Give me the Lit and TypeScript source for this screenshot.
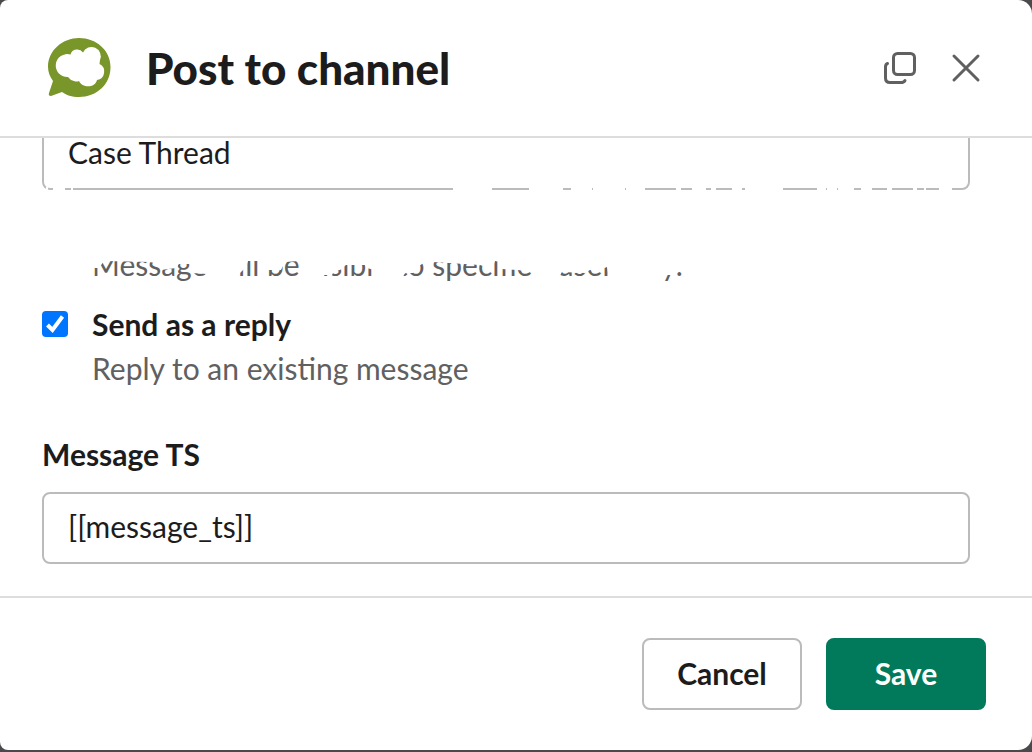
import { LitElement, html, css, svg } from "lit";
import { customElement } from "lit/decorators.js";

// Spans [start, end] along the lower edge of the first field that are worn away.
const EDGE_GAPS: number[][] = [
  [4, 6], [11, 14], [14, 23], [29, 31],
  [411, 450], [487, 521], [529, 550], [551, 583], [584, 603],
  [634, 639], [650, 664], [669, 674], [690, 700], [703, 741],
  [775, 784], [785, 795], [796, 812], [819, 830], [845, 850], [871, 875], [882, 884], [897, 910],
];

// Lower outline of the white patch over the faded note, in the note's own pixels.
const PATCH =
  "0,0 0,26 7,26 12,19 58,20 66,22 69,28 84,26 87,22 99,22 100,31 115,32 116,36 146,36 148,31 154,25 156,19 168,19 172,28 189,28 193,20 207,19 " +
  "208,36 230,36 231,33 240,33 242,29 248,28 254,23 273,23 275,26 282,28 284,36 311,35 313,31 321,31 324,26 333,20 341,20 388,23 400,27 403,19 408,20 " +
  "410,27 426,28 440,30 441,36 467,35 470,30 493,31 498,28 508,28 515,25 517,36 570,36 571,33 584,33 585,26 620,26 620,0";

@customElement("app-root")
export class AppRoot extends LitElement {
  static styles = css`
    :host {
      display: block;
      height: 100vh;
      background: #4a4a4c;
      color: #1d1c1d;
      font: 400 30px/44px Lato, sans-serif;
    }
    * { box-sizing: border-box; }
    .dialog {
      display: flex;
      flex-direction: column;
      height: calc(100vh - 2px);
      background: #fff;
      border-radius: 8px 14px 14px 8px;
      overflow: hidden;
    }
    header {
      display: flex;
      align-items: center;
      height: 138px;
      padding: 0 46px;
      border-bottom: 2px solid #ddd;
      flex: none;
    }
    .logo { width: 66px; height: 66px; flex: none; }
    h1 {
      flex: 1;
      margin: 0 0 0 34px;
      font-size: 44px;
      line-height: 60px;
      font-weight: 900;
    }
    .icon {
      display: flex;
      padding: 0;
      border: 0;
      background: none;
      color: #616061;
    }
    .icon + .icon { margin-left: 26px; }
    .icon svg { width: 40px; height: 40px; }
    main {
      flex: 1;
      min-height: 0;
      display: flex;
      flex-direction: column;
      justify-content: flex-end;
      padding: 0 62px 32px 42px;
      overflow: hidden;
    }
    .field { position: relative; flex: none; display: flex; }
    .text {
      width: 100%;
      height: 72px;
      padding: 0 24px 4px;
      border: 2px solid #bbb;
      border-radius: 8px;
      background: #fff;
      color: inherit;
      font: inherit;
      outline: 0;
    }
    .wear {
      position: absolute;
      left: 0;
      bottom: 0;
      width: 928px;
      height: 3px;
      fill: #fff;
    }
    .note {
      position: relative;
      margin: 52px 0 16px 50px;
      color: #616061;
      white-space: nowrap;
    }
    .patch { position: absolute; left: 0; top: 0; width: 620px; height: 44px; fill: #fff; }
    .check { display: grid; grid-template-columns: 50px 1fr; align-items: center; }
    .box {
      appearance: none;
      width: 26px;
      height: 26px;
      margin: 0;
      border-radius: 4px;
      background: #0075ff;
      grid-area: 1 / 1;
    }
    .tick { grid-area: 1 / 1; width: 26px; height: 26px; pointer-events: none; z-index: 1; }
    .check label { font-weight: 700; grid-area: 1 / 2; }
    .hint { grid-area: 2 / 2; color: #616061; }
    .label { font-weight: 700; margin: 42px 0 16px; }
    footer {
      display: flex;
      justify-content: flex-end;
      gap: 24px;
      flex: none;
      padding: 40px 46px;
      border-top: 2px solid #ddd;
    }
    .btn {
      width: 160px;
      height: 72px;
      padding: 0 0 2px;
      border: 2px solid #bbb;
      border-radius: 8px;
      background: #fff;
      color: inherit;
      font: inherit;
      font-weight: 700;
    }
    .save { background: #007a5a; border-color: #007a5a; color: #fff; }
  `;

  render() {
    return html`
      <section class="dialog" role="dialog" aria-labelledby="title">
        <header>
          <svg class="logo" viewBox="0 0 66 66" aria-hidden="true">
            <path fill="#78962a" d="M33 3C50 3 64.500 15 64.500 32C64.500 50 50 62 33 62C26 62 20 60 16 57L5 61Q2 61 3 58L7 46C4 42 2 37 2 32C2 15 17 3 33 3Z"/>
            <path fill="#fff" d="M24.500 19.500A7 7 0 0 1 37 17.500A9 9 0 0 1 54 25L53.500 29A8.500 8.500 0 0 1 51 45C49 53.500 36 53 33 46Q31 47.200 28 46Q24.500 45.500 22 42A11.500 11.500 0 1 1 24.500 19.500Z"/>
          </svg>
          <h1 id="title">Post to channel</h1>
          <button class="icon" aria-label="Open in new window">
            <svg viewBox="0 0 40 40" fill="none" stroke="currentColor" stroke-width="3" stroke-linecap="round">
              <rect x="13.500" y="5.500" width="21" height="21" rx="4"/>
              <path d="M7.500 15.500C6 16 5.500 17.500 5.500 19V30Q5.500 34.500 10 34.500H21C23 34.500 24.500 33.500 25 32.500"/>
            </svg>
          </button>
          <button class="icon" aria-label="Close">
            <svg viewBox="0 0 40 40" fill="none" stroke="currentColor" stroke-width="3" stroke-linecap="round">
              <path d="M8 8L32 32M32 8L8 32"/>
            </svg>
          </button>
        </header>
        <main>
          <div class="field">
            <input class="text" aria-label="Channel" .value=${"Case Thread"} />
            <svg class="wear" viewBox="0 0 928 3" aria-hidden="true">
              ${EDGE_GAPS.map(([a, b]) => svg`<rect x=${a} y="0" width=${b - a} height="3"/>`)}
            </svg>
          </div>
          <div class="note">
            Message will be visible to specified user only.
            <svg class="patch" viewBox="0 0 620 44" aria-hidden="true"><polygon points=${PATCH} /></svg>
          </div>
          <div class="check">
            <input class="box" id="reply" type="checkbox" checked />
            <svg class="tick" viewBox="0 0 26 26" fill="none" stroke="#fff" stroke-width="4" aria-hidden="true">
              <path d="M5.500 14L10.500 19L20.500 5.500"/>
            </svg>
            <label for="reply">Send as a reply</label>
            <span class="hint">Reply to an existing message</span>
          </div>
          <label class="label" for="ts">Message TS</label>
          <div class="field"><input class="text" id="ts" .value=${"[[message_ts]]"} /></div>
        </main>
        <footer>
          <button class="btn">Cancel</button>
          <button class="btn save">Save</button>
        </footer>
      </section>
    `;
  }
}
